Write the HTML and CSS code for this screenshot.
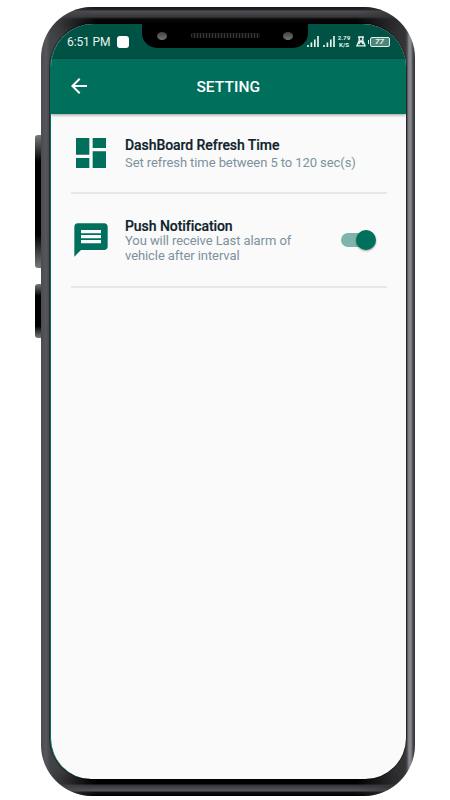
FILE: index.html
```html
<!DOCTYPE html>
<html lang="en">
<head>
<meta charset="utf-8">
<title>Setting</title>
<link rel="stylesheet" href="styles.css">
</head>
<body>
<div class="phone">
  <i class="button volume"></i>
  <i class="button power"></i>
  <div class="shell"></div>
  <main class="screen">
    <div class="status">
      <span class="clock">6:51 PM</span><i class="dot"></i>
      <div class="indicators">
        <svg class="signal" width="12" height="11" viewBox="0 0 12 11"><path d="M1 11V9M4.400 11V6.500M7.800 11V3.500M11 11V0"/></svg>
        <svg class="signal" width="12" height="11" viewBox="0 0 12 11"><path d="M1 11V9M4.400 11V6.500M7.800 11V3.500M11 11V0"/></svg>
        <div class="speed"><span>2.79</span><span>K/S</span></div>
        <svg class="flask" width="10" height="11" viewBox="0 0 10 11"><path d="M2 1h6M3.200 1v3.500L.9 9.900h8.200L6.800 4.500V1M3 7.800l2-3.300 2 3.300"/></svg>
        <span class="battery">77</span>
      </div>
    </div>
    <header class="bar">
      <svg class="back" width="24" height="24" viewBox="0 0 24 24"><path d="M20 11H7.830l5.590-5.590L12 4l-8 8 8 8 1.410-1.410L7.830 13H20z"/></svg>
      <h1>SETTING</h1>
    </header>
    <section class="row refresh">
      <svg class="icon" width="40" height="40" viewBox="0 0 24 24"><path d="M3 13h8V3H3zm0 8h8v-6H3zm10 0h8V11h-8zm0-18v6h8V3z"/></svg>
      <div class="copy"><h2>DashBoard Refresh Time</h2><p>Set refresh time between 5 to 120 sec(s)</p></div>
    </section>
    <section class="row push">
      <svg class="icon" width="40" height="40" viewBox="0 0 24 24"><path d="M20 2H4c-1.100 0-1.990.9-1.990 2L2 22l4-4h14c1.100 0 2-.9 2-2V4c0-1.100-.9-2-2-2zM6 9h12v2H6zm12 5H6v-2h12zm0-6H6V6h12z"/></svg>
      <div class="copy"><h2>Push Notification</h2><p>You will receive Last alarm of<br>vehicle after interval</p></div>
      <span class="toggle"></span>
    </section>
  </main>
  <div class="notch"><i class="lens"></i><i class="speaker"></i><i class="lens"></i></div>
</div>
</body>
</html>
```
FILE: styles.css
```css
* { box-sizing: border-box; }
body { margin: 0; background: #fff; font-family: Roboto, sans-serif; }
.phone { position: relative; width: 450px; height: 800px; overflow: hidden; }
.button { position: absolute; left: 35px; width: 10px; border-radius: 3px; background: linear-gradient(#77797b, #000 20%, #000 75%, #77797b); }
.volume { top: 135px; height: 133px; }
.power { top: 284px; height: 54px; background: linear-gradient(#77797b, #000 22%, #000 78%, #77797b); }
.shell { position: absolute; left: 41px; top: 6.5px; width: 373.5px; height: 789px; border-radius: 51px; background: linear-gradient(90deg, #4a4b4e 0, #56575b 5px, #444548 9px, #444 50%, #343437 364px, #48494d 366px, #8b8c91 368px, #85868b 370px, #47484b 372px, #303134); overflow: hidden; }
.shell::before { content: ""; position: absolute; inset: 0; background: linear-gradient(#17171a 0, #252527 3px, #505053 4px, #36363a 10px, #08080a 12px, #000 18px, transparent 40px, transparent 750px, #000 772px, #000 777px, #323336 778px, #58595c 784px, #111 785px, #000); -webkit-mask-image: linear-gradient(90deg, transparent 9px, #000 55px, #000 315px, transparent 363px); mask-image: linear-gradient(90deg, transparent 9px, #000 55px, #000 315px, transparent 363px); }
.screen { position: relative; margin-left: 50px; top: 24px; width: 355.5px; height: 755px; overflow: hidden; border-radius: 43px 43px 41px 41px; background: #fafafa; border-left: 1px solid #00705d; box-shadow: 0 0 0 1px #0006; }
.status { height: 35px; padding: 0 16px 0 16px; display: flex; align-items: center; color: #e8f3ef; background: #005244; }
.clock { font-size: 12px; line-height: 14px; letter-spacing: -.1px; white-space: nowrap; }
.dot { width: 12px; height: 12px; margin-left: 7px; border-radius: 3px; background: #fff; }
.indicators { margin-left: auto; display: flex; align-items: center; gap: 3px; }
.signal, .flask { fill: none; stroke: #e8f3ef; stroke-width: 1.7; }
.signal + .signal { margin-left: 1px; }
.flask { stroke-width: 1.4; margin-left: 2px; }
.speed { display: flex; flex-direction: column; width: 13px; text-align: center; font-size: 6.2px; font-weight: 700; }
.speed span { height: 7px; line-height: 7px; }
.battery { position: relative; width: 20px; height: 10px; margin-left: 1px; border: 1px solid #e0eeea; border-radius: 2px; background: #4f8578; font: italic 700 8px/8px Roboto, sans-serif; text-align: center; }
.battery::before { content: ""; position: absolute; left: -3px; top: 2px; width: 1.5px; height: 4px; background: #e0eeea; }
.bar { position: relative; height: 55px; display: flex; align-items: center; justify-content: center; color: #fff; background: #00705d; box-shadow: 0 1px 3px #0006; }
.bar h1 { margin: 0; font-size: 15.5px; font-weight: 500; letter-spacing: .05px; }
.back { position: absolute; left: 16px; top: 15px; fill: #fff; }
.row { margin: 0 19px 0 19.5px; display: flex; align-items: flex-start; border-bottom: 2px solid #e8e8e8; }
.refresh { height: 80px; padding-top: 19px; }
.push { height: 94px; padding-top: 26px; }
.icon { width: 40px; flex: none; fill: #00705d; }
.copy { margin-left: 14.5px; flex: 1; white-space: nowrap; }
.copy h2 { margin: 0; color: #0f232c; font-size: 14px; font-weight: 500; line-height: 16px; letter-spacing: -.06px; -webkit-text-stroke: .2px #0f232c; }
.copy p { margin: 0; color: #7c929d; font-size: 13px; line-height: 15px; letter-spacing: -.08px; }
.refresh .copy { margin-top: 4px; }
.refresh p { margin-top: 2px; }
.push .copy { margin-top: -2px; }
.push p { margin-top: -1px; }
.toggle { position: relative; flex: none; width: 33px; height: 14px; margin: 13px 12.5px 0 0; border-radius: 7px; background: #7db5aa; }
.toggle::after { content: ""; position: absolute; right: -2px; top: -3px; width: 20px; height: 20px; border-radius: 50%; background: #00705d; box-shadow: 0 1px 2px #0006; }
.notch { position: absolute; left: 142px; top: 23px; width: 166px; height: 25px; padding: 0 15px; display: flex; align-items: center; justify-content: space-between; border-radius: 0 0 15px 15px; background: #000; }
.lens { width: 10px; height: 8px; border-radius: 50%; background: linear-gradient(#414141, #737373); }
.speaker { width: 69px; height: 5px; border-radius: 2px; background: repeating-linear-gradient(90deg, #363636 0 1.5px, #111 1.5px 3px); }
```
